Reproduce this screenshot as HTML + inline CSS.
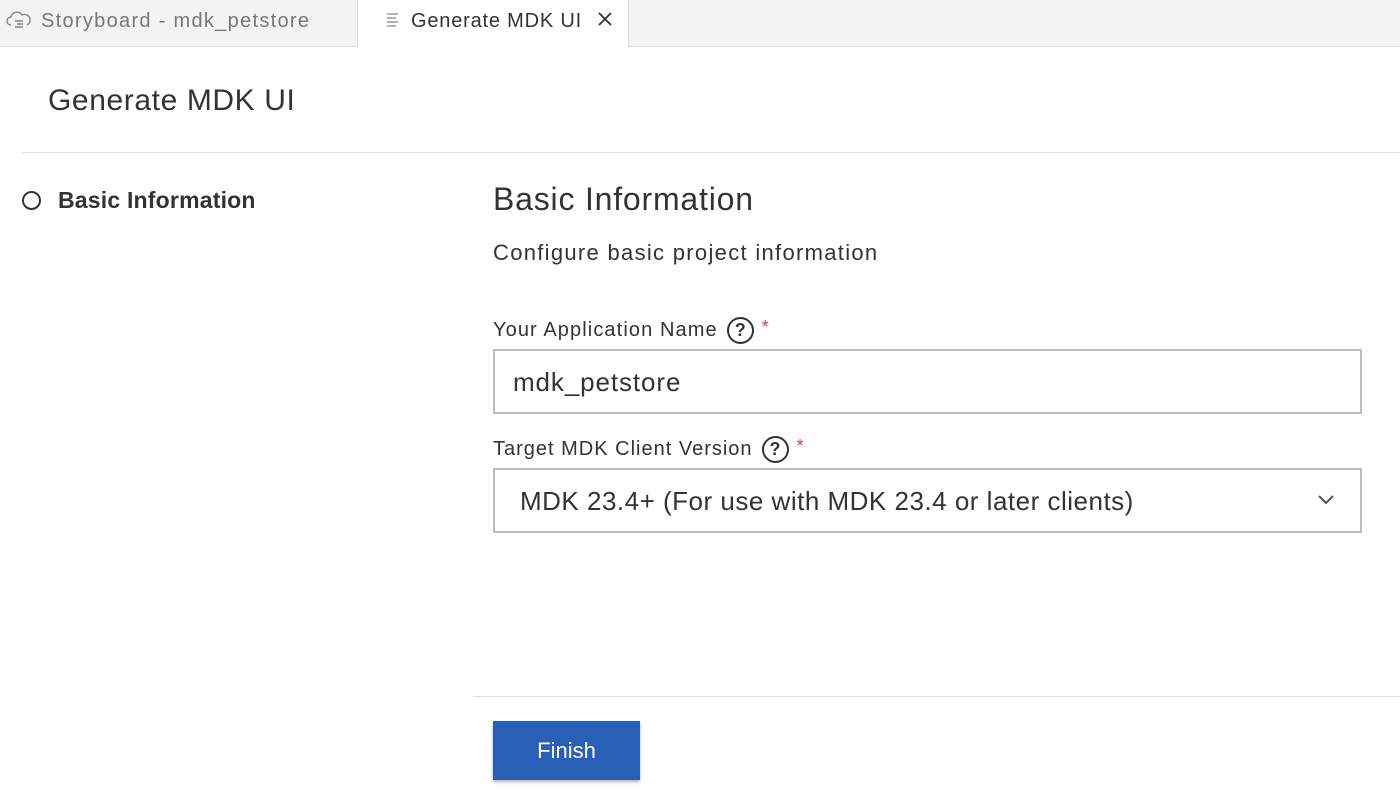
<!DOCTYPE html>
<html><head><style>
*{box-sizing:border-box;margin:0;padding:0}
body{width:1400px;height:790px;overflow:hidden;background:#fff;font-family:"Liberation Sans",sans-serif;color:#333;position:relative}
.abs{position:absolute}
.tabbar{left:0;top:0;width:1400px;height:47px;background:#f3f3f3;border-bottom:1px solid #e0e0e0}
.tab1{left:0;top:0;width:358px;height:47px;border-right:1px solid #e0e0e0;font-size:20px;color:#777;padding:10px 0 0 41px;letter-spacing:1.3px}
.tab2{left:358px;top:0;width:271px;height:48px;background:#fff;border-right:1px solid #e0e0e0;font-size:20px;color:#333;padding:10px 0 0 53px;letter-spacing:0.8px}
.help{display:inline-block;width:27px;height:27px;border:2px solid #333;border-radius:50%;text-align:center;font-size:18px;font-weight:bold;line-height:23px;vertical-align:middle;margin-left:9px;letter-spacing:0}
.star{color:#e53935;font-size:18px;vertical-align:top;margin-left:8px}
.input{left:493px;width:869px;height:65px;border:2px solid #bdbdbd;font-size:26px;color:#333}
</style></head><body>
<div class="abs tabbar"></div>
<div class="abs tab1">Storyboard - mdk_petstore</div>
<svg class="abs" style="left:5px;top:10px" width="28" height="20" viewBox="0 0 28 20" fill="none" stroke="#888" stroke-width="1.4"><path d="M6 15a4 4 0 0 1 0-8a6 6 0 0 1 11-2a5 5 0 0 1 5 10"/><path d="M10 11h8M12 14h6M10 17h8"/></svg>
<div class="abs tab2">Generate MDK UI</div>
<svg class="abs" style="left:386px;top:12px" width="14" height="16" stroke="#999" stroke-width="1.4"><path d="M1 2h11M1 6h9M1 10h11M1 14h9"/></svg>
<svg class="abs" style="left:597px;top:11px" width="16" height="16" stroke="#333" stroke-width="1.8"><path d="M2 2l12 12M14 2L2 14"/></svg>
<div class="abs" style="left:48px;top:84px;font-size:30px;color:#333;letter-spacing:0.6px">Generate MDK UI</div>
<div class="abs" style="left:22px;top:152px;width:1378px;height:1px;background:#ddd"></div>
<div class="abs" style="left:22px;top:191px;width:19px;height:19px;border:2px solid #333;border-radius:50%"></div>
<div class="abs" style="left:58px;top:187px;font-size:23px;font-weight:bold;color:#333;letter-spacing:0.2px">Basic Information</div>
<div class="abs" style="left:493px;top:181px;font-size:32px;color:#333;letter-spacing:0.8px">Basic Information</div>
<div class="abs" style="left:493px;top:240px;font-size:22px;color:#333;letter-spacing:1.3px">Configure basic project information</div>
<div class="abs" style="left:493px;top:317px;font-size:20px;color:#333;letter-spacing:1.1px">Your Application Name<span class="help">?</span><span class="star">*</span></div>
<div class="abs input" style="top:349px;padding:16px 0 0 18px;letter-spacing:0.9px">mdk_petstore</div>
<div class="abs" style="left:493px;top:436px;font-size:20px;color:#333;letter-spacing:1.0px">Target MDK Client Version<span class="help">?</span><span class="star">*</span></div>
<div class="abs input" style="top:468px;padding:16px 0 0 25px;letter-spacing:0.5px">MDK 23.4+ (For use with MDK 23.4 or later clients)</div>
<svg class="abs" style="left:1317px;top:494px" width="18" height="12" fill="none" stroke="#555" stroke-width="2"><path d="M2 2l7 7 7-7"/></svg>
<div class="abs" style="left:473px;top:696px;width:927px;height:1px;background:#ddd"></div>
<div class="abs" style="left:493px;top:721px;width:147px;height:59px;background:#2a5fb8;color:#fff;font-size:22px;text-align:center;line-height:59px;box-shadow:0 2px 3px rgba(0,0,0,.3)">Finish</div>
</body></html>
